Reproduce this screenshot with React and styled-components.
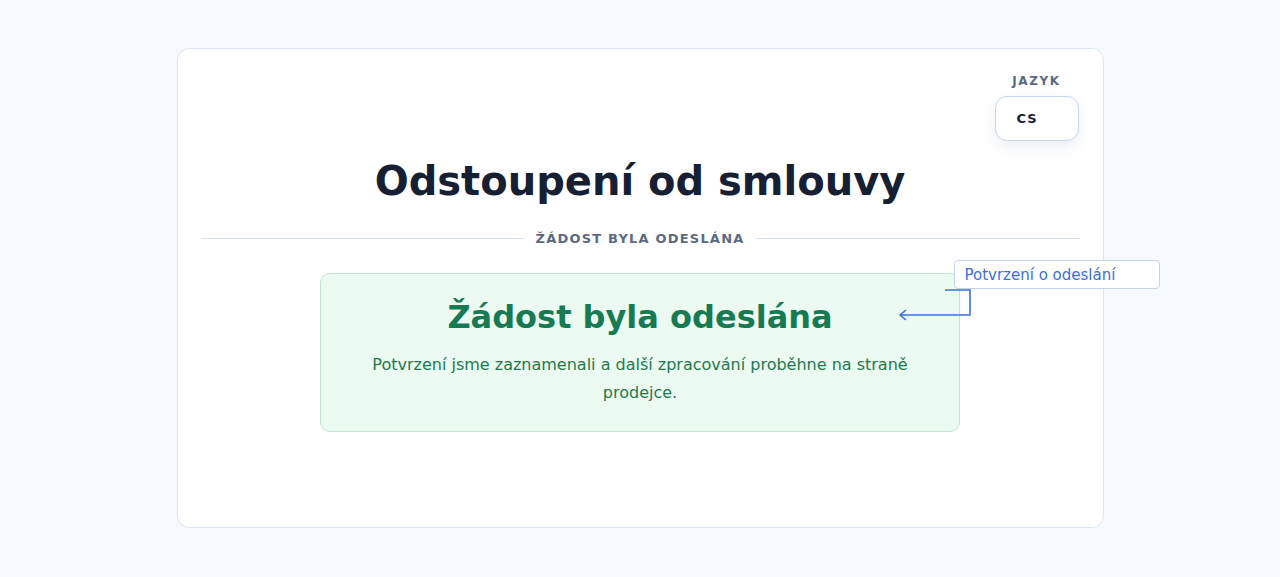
import React from "react";
import styled, { createGlobalStyle } from "styled-components";

const GlobalStyle = createGlobalStyle`
  * { box-sizing: border-box; }
  body {
    margin: 0;
    background: #f6f9fd;
    font-family: "DejaVu Sans", "Noto Sans", sans-serif;
    color: #172033;
  }
`;

const Page = styled.div`
  min-height: 577px;
  padding: 48px 0 50px;
  display: flex;
  justify-content: center;
`;

const Card = styled.div`
  position: relative;
  width: 927px;
  background: #ffffff;
  border: 1px solid #dbe5f1;
  border-radius: 12px;
  padding: 25px 23px 95px;
  display: flex;
  flex-direction: column;
  align-items: center;
`;

const TopRow = styled.div`
  align-self: stretch;
  display: flex;
  justify-content: flex-end;
  padding-right: 1px;
`;

const LangField = styled.label`
  display: flex;
  flex-direction: column;
  align-items: center;
  gap: 8px;
`;

const LangLabel = styled.span`
  font-size: 12px;
  font-weight: 700;
  letter-spacing: 1.6px;
  color: #5b6a82;
`;

const LangSelect = styled.div`
  width: 84px;
  height: 45px;
  border: 1px solid #c6d8ee;
  border-radius: 12px;
  background: #fff;
  box-shadow: 0 6px 14px rgba(30, 50, 90, 0.08);
  display: flex;
  align-items: center;
  padding-left: 21px;
  font-size: 13px;
  font-weight: 700;
  letter-spacing: 1px;
  color: #172033;
`;

const Title = styled.h1`
  margin: 14px 0 0;
  font-size: 40px;
  font-weight: 700;
  line-height: 52px;
  color: #172033;
`;

const Divider = styled.div`
  align-self: stretch;
  margin-top: 24px;
  display: flex;
  align-items: center;
  gap: 12px;
  &::before,
  &::after {
    content: "";
    flex: 1;
    height: 1px;
    background: #d6e2ef;
  }
`;

const DividerText = styled.span`
  font-size: 13px;
  font-weight: 700;
  letter-spacing: 1.2px;
  color: #5b6a82;
`;

const SuccessBox = styled.div`
  position: relative;
  margin-top: 27px;
  width: 640px;
  background: #ebfbf1;
  border: 1px solid #bfe6cf;
  border-radius: 10px;
  padding: 21px 40px 24px;
  text-align: center;
`;

const SuccessTitle = styled.h2`
  margin: 0;
  font-size: 32px;
  font-weight: 700;
  line-height: 44px;
  color: #177a52;
`;

const SuccessText = styled.p`
  margin: 12px 0 0;
  font-size: 16px;
  line-height: 28px;
  color: #1d7a4e;
`;

const Note = styled.div`
  position: absolute;
  left: 776px;
  top: 211px;
  width: 206px;
  height: 29px;
  background: #fff;
  border: 1px solid #c3d4ea;
  border-radius: 4px;
  padding-left: 10px;
  display: flex;
  align-items: center;
  font-size: 15px;
  color: #3b6fe0;
  white-space: nowrap;
`;

const Connector = styled.svg`
  position: absolute;
  left: 720px;
  top: 238px;
`;

export default function App() {
  return (
    <>
      <GlobalStyle />
      <Page>
        <Card>
          <TopRow>
            <LangField>
              <LangLabel>JAZYK</LangLabel>
              <LangSelect>CS</LangSelect>
            </LangField>
          </TopRow>
          <Title>Odstoupení od smlouvy</Title>
          <Divider>
            <DividerText>ŽÁDOST BYLA ODESLÁNA</DividerText>
          </Divider>
          <SuccessBox>
            <SuccessTitle>Žádost byla odeslána</SuccessTitle>
            <SuccessText>
              Potvrzení jsme zaznamenali a další zpracování proběhne na straně
              prodejce.
            </SuccessText>
          </SuccessBox>
          <Connector width="80" height="34" viewBox="0 0 80 34">
            <path
              d="M47 3 H72 V28 H2 M8 23 L2 28 L8 33"
              fill="none"
              stroke="#3b74e0"
              strokeWidth="1.6"
            />
          </Connector>
          <Note>Potvrzení o odeslání</Note>
        </Card>
      </Page>
    </>
  );
}
